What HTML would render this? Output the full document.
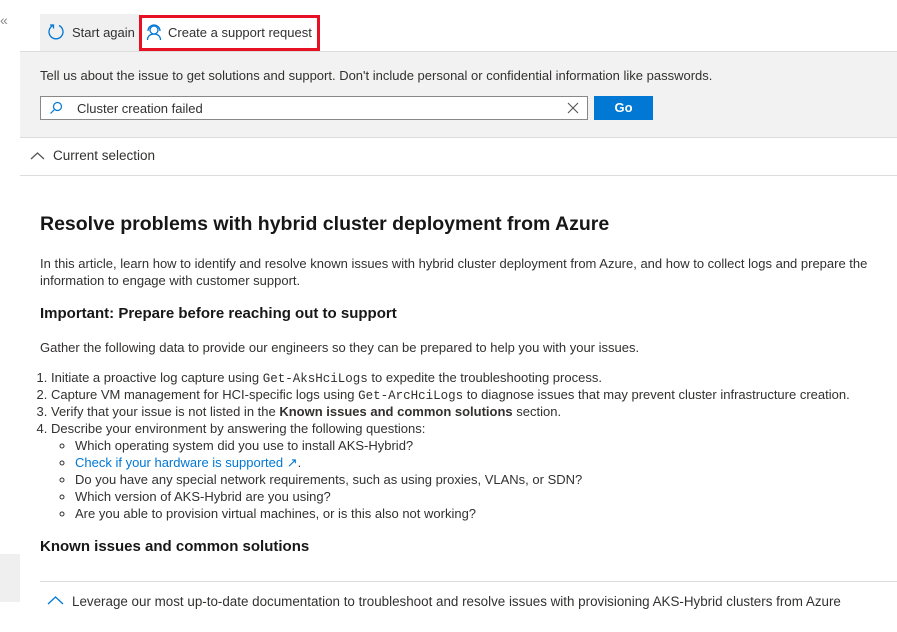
<!DOCTYPE html>
<html><head><style>
body{margin:0;width:897px;height:632px;background:#fff;font-family:"Liberation Sans",sans-serif;color:#323130;position:relative;overflow:hidden;font-size:13px}
.a{position:absolute;white-space:nowrap}
code{font-family:"Liberation Mono",monospace;font-size:12.5px;line-height:10px}
ul,ol{margin:0}
li{height:17px}
li.p{height:auto}
</style></head><body>
<div class="a" style="left:0;top:12px;color:#888;font-size:14px">«</div>
<div class="a" style="left:40px;top:14px;width:100px;height:37px;background:#f0f0f0"></div>
<svg class="a" style="left:47px;top:23px" width="18" height="18" viewBox="0 0 18 18"><path d="M6 2.5A7 7 0 1 0 12 2.5" fill="none" stroke="#0078d4" stroke-width="1.3"/><path d="M3 2h3.5v3.5" fill="none" stroke="#0078d4" stroke-width="1.3"/></svg>
<div class="a" style="left:72px;top:25px;font-size:13px">Start again</div>
<div class="a" style="left:139px;top:15px;width:175px;height:30px;border:3px solid #e81123;background:#fff"></div>
<svg class="a" style="left:145px;top:23px" width="18" height="18" viewBox="0 0 18 18"><circle cx="9" cy="7" r="4" fill="none" stroke="#0078d4" stroke-width="1.3"/><path d="M2.5 17c0-4 3-6 6.5-6s6.5 2 6.5 6" fill="none" stroke="#0078d4" stroke-width="1.3"/><path d="M3 8a6 6 0 0 1 12 0" fill="none" stroke="#0078d4" stroke-width="1.3"/></svg>
<div class="a" style="left:168px;top:25px;font-size:13px">Create a support request</div>
<div class="a" style="left:20px;top:51px;width:877px;height:85px;background:#f2f2f2;border-top:1px solid #ddd;border-bottom:1px solid #ddd"></div>
<div class="a" style="left:40px;top:68px;font-size:13px">Tell us about the issue to get solutions and support. Don't include personal or confidential information like passwords.</div>
<div class="a" style="left:40px;top:96px;width:546px;height:22px;background:#fff;border:1px solid #8a8886"></div>
<svg class="a" style="left:48px;top:100px" width="16" height="16" viewBox="0 0 16 16"><circle cx="9.5" cy="6.5" r="4" fill="none" stroke="#0078d4" stroke-width="1.2"/><path d="M6.5 9.5L2.5 13.5" stroke="#0078d4" stroke-width="1.2"/></svg>
<div class="a" style="left:77px;top:101px">Cluster creation failed</div>
<svg class="a" style="left:566px;top:101px" width="14" height="14"><path d="M2 2L12 12M12 2L2 12" stroke="#555" stroke-width="1.1"/></svg>
<div class="a" style="left:594px;top:96px;width:59px;height:24px;background:#0078d4;color:#fff;font-weight:bold;font-size:13px;text-align:center;line-height:24px">Go</div>
<svg class="a" style="left:30px;top:150px" width="16" height="12"><path d="M1 9L7.5 3L14 9" fill="none" stroke="#555" stroke-width="1.3"/></svg>
<div class="a" style="left:53px;top:148px;font-size:13.5px;color:#323130">Current selection</div>
<div class="a" style="left:20px;top:175px;width:877px;border-top:1px solid #ddd"></div>
<div class="a" style="left:40px;top:213px;font-size:19.5px;font-weight:bold;color:#171717">Resolve problems with hybrid cluster deployment from Azure</div>
<div class="a" style="left:40px;top:255px;line-height:17px;white-space:normal;width:850px">In this article, learn how to identify and resolve known issues with hybrid cluster deployment from Azure, and how to collect logs and prepare the information to engage with customer support.</div>
<div class="a" style="left:40px;top:305px;font-size:15px;font-weight:bold;color:#171717">Important: Prepare before reaching out to support</div>
<div class="a" style="left:40px;top:340px">Gather the following data to provide our engineers so they can be prepared to help you with your issues.</div>
<div class="a" style="left:24px;top:369px;line-height:17px">
<ol style="padding-left:27px">
<li>Initiate a proactive log capture using <code>Get-AksHciLogs</code> to expedite the troubleshooting process.</li>
<li>Capture VM management for HCI-specific logs using <code>Get-ArcHciLogs</code> to diagnose issues that may prevent cluster infrastructure creation.</li>
<li>Verify that your issue is not listed in the <b>Known issues and common solutions</b> section.</li>
<li class="p">Describe your environment by answering the following questions:
<ul style="list-style:circle;padding-left:24px">
<li>Which operating system did you use to install AKS-Hybrid?</li>
<li><span style="color:#0078d4">Check if your hardware is supported <span style="font-size:13px">↗</span></span>.</li>
<li>Do you have any special network requirements, such as using proxies, VLANs, or SDN?</li>
<li>Which version of AKS-Hybrid are you using?</li>
<li>Are you able to provision virtual machines, or is this also not working?</li>
</ul></li></ol></div>
<div class="a" style="left:40px;top:538px;font-size:15px;font-weight:bold;color:#171717">Known issues and common solutions</div>
<div class="a" style="left:0;top:554px;width:20px;height:48px;background:#efefef"></div>
<div class="a" style="left:40px;top:581px;width:857px;border-top:1px solid #ddd"></div>
<svg class="a" style="left:47px;top:594px" width="18" height="12"><path d="M1 10L8.5 3L16 10" fill="none" stroke="#0078d4" stroke-width="1.3"/></svg>
<div class="a" style="left:72px;top:594px;font-size:13.4px">Leverage our most up-to-date documentation to troubleshoot and resolve issues with provisioning AKS-Hybrid clusters from Azure</div>
</body></html>
